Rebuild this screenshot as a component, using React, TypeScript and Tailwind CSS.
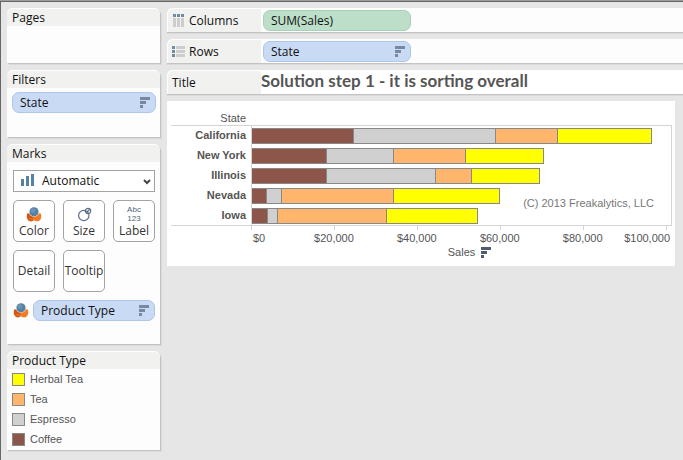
import React from "react";
import clsx from "clsx";

const AXIS_MAX = 101500;
const TICK_STEP = 20000;

const products = [
  { name: "Herbal Tea", color: "bg-[#ffff00]" },
  { name: "Tea", color: "bg-[#ffb56b]" },
  { name: "Espresso", color: "bg-[#d0d0d0]" },
  { name: "Coffee", color: "bg-[#8c564b]" },
];

// stacked from the axis outwards: Coffee, Espresso, Tea, Herbal Tea
const stack = [...products].reverse();

const states = [
  { name: "California", sales: [24700, 34400, 15000, 22800] },
  { name: "New York", sales: [18200, 16200, 17400, 18900] },
  { name: "Illinois", sales: [18200, 26400, 8700, 16500] },
  { name: "Nevada", sales: [3650, 3600, 27150, 25700] },
  { name: "Iowa", sales: [3900, 2400, 26400, 22050] },
];

const percent = (value: number) => `${(value / AXIS_MAX) * 100}%`;

const SortIcon: React.FC<{ className?: string }> = ({ className }) => (
  <svg
    width="10"
    height="11"
    viewBox="0 0 10 11"
    fill="currentColor"
    shapeRendering="crispEdges"
    className={clsx("shrink-0", className)}
    aria-hidden="true"
  >
    <rect width="10" height="3" />
    <rect y="4" width="6" height="3" />
    <rect y="8" width="3" height="3" />
  </svg>
);

const ColorIcon: React.FC = () => (
  <svg width="16" height="15" viewBox="0 0 16 15" className="shrink-0" aria-hidden="true">
    <path d="M1.500 6.200C0 9 .8 12.500 3.200 14c1.800.8 3.600.3 4.800-1.200V7Z" fill="#d4560f" />
    <path d="M14.500 6.200c1.500 2.800.7 6.300-1.700 7.800-1.900.8-3.900.3-5.300-1.500V7Z" fill="#f47b20" />
    <path d="M3.300 11.500c1.500 1 3.200.8 4.500-.6" stroke="#f08a3c" fill="none" />
    <circle cx="8" cy="5" r="5" fill="#fdfdfd" fillOpacity=".8" />
    <circle cx="8" cy="4.800" r="4.600" fill="#5581a4" />
    <circle cx="7" cy="3.600" r="2.400" fill="#7ba0bd" fillOpacity=".6" />
  </svg>
);

const SizeIcon: React.FC = () => (
  <svg
    width="15"
    height="15"
    viewBox="0 0 15 15"
    fill="none"
    stroke="#5b6f86"
    strokeWidth="1.200"
    className="shrink-0"
    aria-hidden="true"
  >
    <circle cx="6.800" cy="8.500" r="5.200" />
    <circle cx="11" cy="4" r="2.700" />
    <path d="m9.500 5.500 3-3" />
  </svg>
);

const BarsIcon: React.FC = () => (
  <svg
    width="14"
    height="12"
    viewBox="0 0 14 12"
    fill="#5581a4"
    shapeRendering="crispEdges"
    aria-hidden="true"
  >
    <rect y="5" width="3" height="7" />
    <rect x="5" y="2" width="3" height="10" />
    <rect x="10" width="3" height="12" />
  </svg>
);

const ColumnsIcon: React.FC = () => (
  <svg width="13" height="13" viewBox="0 0 13 13" shapeRendering="crispEdges" aria-hidden="true">
    {[1, 5, 9].map((x) => (
      <g key={x}>
        <rect x={x} width="3" height="3" fill="#708ca0" />
        <rect x={x} y="4" width="3" height="9" fill="#cdcdcd" />
      </g>
    ))}
  </svg>
);

const RowsIcon: React.FC = () => (
  <svg width="13" height="11" viewBox="0 0 13 11" shapeRendering="crispEdges" aria-hidden="true">
    {[0, 4, 8].map((y) => (
      <g key={y}>
        <rect y={y} width="3" height="3" fill="#708ca0" />
        <rect x="4" y={y} width="9" height="3" fill="#cdcdcd" />
      </g>
    ))}
  </svg>
);

const Pill: React.FC<{ label: string; color?: "blue" | "green"; sorted?: boolean; className?: string }> = ({
  label,
  color = "blue",
  sorted,
  className,
}) => (
  <button
    type="button"
    className={clsx(
      "flex h-[21px] items-center justify-between rounded-[7px] border pr-[5px] pl-[7px]",
      color === "blue" ? "border-[#adc6ea] bg-[#c9daf4]" : "border-[#a9d0b8] bg-[#bddfca]",
      className
    )}
  >
    {label}
    {sorted && <SortIcon className="text-[#7888a2]" />}
  </button>
);

const Card: React.FC<{ title: string; className?: string; children?: React.ReactNode }> = ({
  title,
  className,
  children,
}) => (
  <section
    className={clsx(
      "rounded-t-[6px] bg-[#fdfdfd] shadow-[1px_1px_0_#c3c3c3,2px_2px_0_#dadada]",
      className
    )}
  >
    <h2 className="h-[18px] rounded-t-[6px] border-t border-white bg-[#f1f1ef] pl-[5px] leading-[18px]">
      {title}
    </h2>
    {children}
  </section>
);

const Shelf: React.FC<{ label: string; icon?: React.ReactNode; children: React.ReactNode }> = ({
  label,
  icon,
  children,
}) => (
  <div className="flex h-6 items-end rounded-tl-[6px] bg-[#fdfdfd] shadow-[0_1px_0_#c3c3c3,0_2px_0_#dadada]">
    <div className="flex h-full w-[94px] shrink-0 items-center rounded-tl-[6px] border-t border-l border-white bg-[#f1f1ef] pl-1">
      {icon && <span className="flex w-[17px]">{icon}</span>}
      {label}
    </div>
    {children}
  </div>
);

const MarkButton: React.FC<{ label: string; children?: React.ReactNode }> = ({ label, children }) => (
  <button
    type="button"
    className="flex h-[42px] flex-col items-center justify-center rounded-[5px] border border-[#a3a3a3] bg-white text-[#333]"
  >
    {children && <span className="mt-[2px] flex h-[18px] items-center">{children}</span>}
    <span className="leading-[16px]">{label}</span>
  </button>
);

const SalesChart: React.FC = () => (
  <section className="mr-2 bg-white pt-[10px] pr-[3px] pb-[7px] pl-1 font-['Liberation_Sans',Arial,sans-serif] text-[11px] text-[#555]">
    <div className="w-20 pr-[5px] text-right leading-[14px]">State</div>
    <div className="relative flex border-y border-r border-[#d4d4d4] pt-[2px] pb-px">
      <div className="flex w-20 shrink-0 flex-col gap-1 pr-[5px] text-right font-bold">
        {states.map((state) => (
          <div key={state.name} className="h-4 leading-[15px]">
            {state.name}
          </div>
        ))}
      </div>
      <div className="-mt-[2px] -mb-px flex grow flex-col gap-1 border-l border-[#d4d4d4] pt-[2px] pb-px">
        {states.map((state) => (
          <div key={state.name} className="flex h-4">
            {state.sales.map((value, i) => (
              <div
                key={stack[i].name}
                className={clsx("border-y border-r border-[#888]", stack[i].color)}
                style={{ width: percent(value) }}
              />
            ))}
          </div>
        ))}
      </div>
      <p className="absolute right-[17px] bottom-[15px] leading-[14px] text-[#777]">
        (C) 2013 Freakalytics, LLC
      </p>
    </div>
    <div className="ml-20">
      <div className="flex h-1">
        {[0, 1, 2, 3, 4].map((tick) => (
          <div
            key={tick}
            className="border-l border-[#d4d4d4]"
            style={{ width: percent(TICK_STEP) }}
          />
        ))}
        <div className="border-l border-[#d4d4d4]" />
      </div>
      <div className="flex pt-px leading-[14px]">
        <span className="pl-[2px]" style={{ width: percent(TICK_STEP / 2) }}>
          $0
        </span>
        {["$20,000", "$40,000", "$60,000", "$80,000"].map((label) => (
          <span key={label} className="text-center" style={{ width: percent(TICK_STEP) }}>
            {label}
          </span>
        ))}
        <span className="grow pr-[2px] text-right">$100,000</span>
      </div>
      <div className="flex items-center justify-center gap-[6px] pl-4 leading-[14px]">
        Sales
        <SortIcon className="text-[#4e5b70]" />
      </div>
    </div>
  </section>
);

const App: React.FC = () => {
  return (
    <div className="flex min-h-screen flex-col border-t border-[#9c9c9c] bg-[#e6e6e6] font-['Open_Sans','Noto_Sans',sans-serif] text-[12px] text-[#111]">
      <div className="flex grow gap-[7px] border-t border-l border-[#666] pt-[6px] pl-[6px]">
        <aside className="flex w-[153px] shrink-0 flex-col gap-[7px]">
          <Card title="Pages" className="h-[55px]" />
          <Card title="Filters" className="h-[67px]">
            <div className="pt-1 pr-1 pl-[5px]">
              <Pill label="State" sorted className="w-full" />
            </div>
          </Card>
          <Card title="Marks" className="h-[200px]">
            <div className="pt-2 pr-[5px] pl-[6px]">
              <div className="relative">
                <select
                  aria-label="Mark type"
                  className="h-[22px] w-full appearance-none border border-[#a3a3a3] bg-white pl-7"
                >
                  <option>Automatic</option>
                  <option>Bar</option>
                  <option>Line</option>
                </select>
                <span className="pointer-events-none absolute top-1 left-2">
                  <BarsIcon />
                </span>
                <svg
                  width="8"
                  height="6"
                  viewBox="0 0 8 6"
                  fill="none"
                  stroke="#444"
                  strokeWidth="2"
                  className="pointer-events-none absolute top-[9px] right-1"
                  aria-hidden="true"
                >
                  <path d="m1 1 3 3 3-3" />
                </svg>
              </div>
              <div className="grid grid-cols-3 gap-2 pt-2">
                <MarkButton label="Color">
                  <ColorIcon />
                </MarkButton>
                <MarkButton label="Size">
                  <SizeIcon />
                </MarkButton>
                <MarkButton label="Label">
                  <span className="font-['Liberation_Sans',Arial,sans-serif] text-[8px] leading-[9px] text-[#4e5f78]">
                    Abc
                    <br />
                    123
                  </span>
                </MarkButton>
                <MarkButton label="Detail" />
                <MarkButton label="Tooltip" />
              </div>
              <div className="flex items-center gap-1 pt-2">
                <ColorIcon />
                <Pill label="Product Type" sorted className="grow" />
              </div>
            </div>
          </Card>
          <Card title="Product Type" className="h-[99px]">
            <ul className="flex flex-col gap-[7px] pt-1 pl-[5px] font-['Liberation_Sans',Arial,sans-serif] text-[11px] leading-[13px] text-[#555]">
              {products.map((product) => (
                <li key={product.name} className="flex items-center gap-[5px]">
                  <span className={clsx("size-[13px] border border-[#888]", product.color)} />
                  {product.name}
                </li>
              ))}
            </ul>
          </Card>
        </aside>
        <main className="flex min-w-0 grow flex-col gap-[7px]">
          <Shelf label="Columns" icon={<ColumnsIcon />}>
            <Pill label="SUM(Sales)" color="green" className="mb-px ml-[2px] w-[148px]" />
          </Shelf>
          <Shelf label="Rows" icon={<RowsIcon />}>
            <Pill label="State" sorted className="mb-px ml-[2px] w-[148px]" />
          </Shelf>
          <Shelf label="Title">
            <h1 className="h-full grow bg-white font-['Lato','Open_Sans',sans-serif] text-[17px] leading-[22px] font-bold whitespace-nowrap text-[#555]">
              Solution step 1 - it is sorting overall
            </h1>
          </Shelf>
          <SalesChart />
        </main>
      </div>
    </div>
  );
};

export default App;
